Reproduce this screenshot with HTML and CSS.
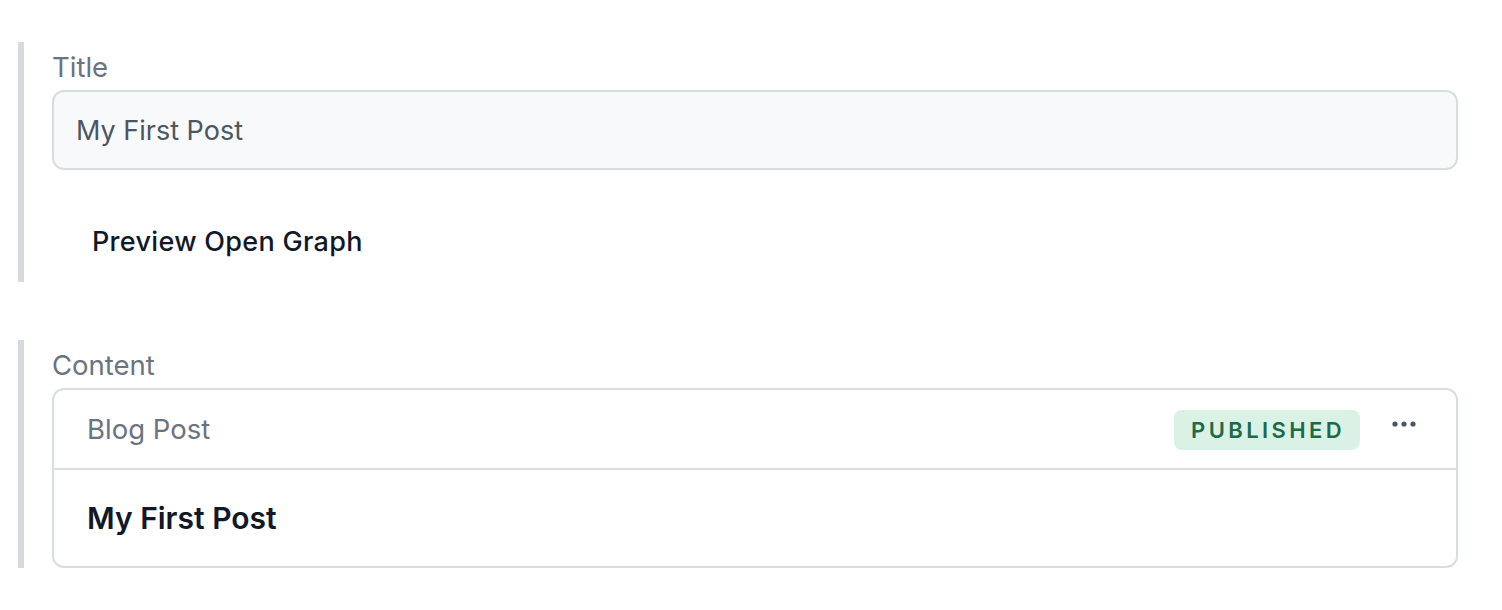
FILE: index.html
```html
<!DOCTYPE html>
<html lang="en">
<head>
<meta charset="utf-8">
<title>Post</title>
<link rel="stylesheet" href="styles.css">
</head>
<body>
<div class="page">
  <section class="field">
    <div class="label">Title</div>
    <div class="input">My First Post</div>
    <div class="preview">Preview Open Graph</div>
  </section>
  <section class="field field-content">
    <div class="label">Content</div>
    <div class="card">
      <div class="card-head">
        <span class="card-type">Blog Post</span>
        <div class="card-actions">
          <span class="badge">PUBLISHED</span>
          <svg class="dots" width="26" height="8" viewBox="0 0 26 8" aria-hidden="true">
            <circle cx="3" cy="4" r="2.6" fill="#4b5563"/>
            <circle cx="12" cy="4" r="2.6" fill="#4b5563"/>
            <circle cx="21" cy="4" r="2.6" fill="#4b5563"/>
          </svg>
        </div>
      </div>
      <div class="card-body">My First Post</div>
    </div>
  </section>
</div>
</body>
</html>
```
FILE: styles.css
```css
html, body {
  margin: 0;
  padding: 0;
  background: #ffffff;
}
body {
  font-family: Inter, "Noto Sans", "Liberation Sans", sans-serif;
  -webkit-font-smoothing: antialiased;
}
.page {
  padding: 42px 44px 0 18px;
  display: flex;
  flex-direction: column;
  gap: 58px;
}
.field {
  border-left: 6px solid #d6d9dd;
  padding: 6px 0 4px 28px;
  display: flex;
  flex-direction: column;
  gap: 6px;
}
.field-content {
  padding-bottom: 0;
}
.label {
  font-size: 27.5px;
  line-height: 36px;
  color: #6b7280;
  margin-top: 1px;
  margin-bottom: -1px;
}
.input {
  height: 76px;
  box-sizing: content-box;
  border: 2px solid #d8dedf;
  border-radius: 12px;
  background: #f8f9fa;
  padding: 0 22px;
  display: flex;
  align-items: center;
  font-size: 27px;
  color: #4b5563;
}
.preview {
  margin-top: 30px;
  padding: 18px 40px;
  font-size: 27px;
  line-height: 36px;
  font-weight: 500;
  letter-spacing: 0.3px;
  color: #111827;
}
.card {
  border: 2px solid #d8dedf;
  border-radius: 12px;
  background: #ffffff;
}
.card-head {
  height: 78px;
  border-bottom: 2px solid #d8dedf;
  display: flex;
  align-items: center;
  justify-content: space-between;
  padding: 0 38px 0 33px;
}
.card-type {
  font-size: 27.5px;
  color: #6b7280;
}
.card-actions {
  display: flex;
  align-items: center;
  gap: 32px;
}
.badge {
  height: 40px;
  display: flex;
  align-items: center;
  padding: 0 15px 0 17px;
  border-radius: 8px;
  background: #d9f2e5;
  color: #1d6a46;
  font-size: 22px;
  font-weight: 600;
  letter-spacing: 3.4px;
  margin-top: 2px;
}
.dots {
  display: block;
  margin-top: -10px;
}
.card-body {
  height: 96px;
  display: flex;
  align-items: center;
  padding: 0 33px;
  font-size: 30px;
  font-weight: 600;
  color: #111827;
}
```
